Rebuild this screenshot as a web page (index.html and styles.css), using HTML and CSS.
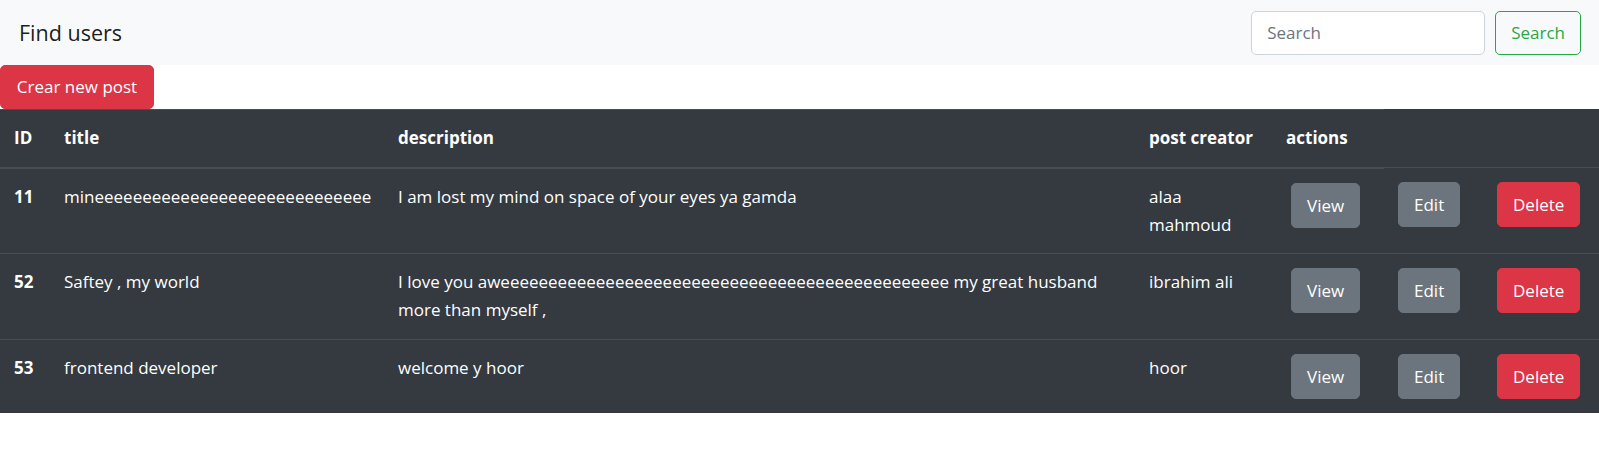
FILE: index.html
```html
<!DOCTYPE html>
<html lang="en">
<head>
<meta charset="utf-8">
<title>Find users</title>
<link rel="stylesheet" href="styles.css">
</head>
<body>
<nav class="navbar">
  <span class="brand">Find users</span>
  <form class="search-form">
    <input class="search-input" type="search" placeholder="Search">
    <button class="btn btn-outline-success" type="button">Search</button>
  </form>
</nav>
<button class="btn btn-danger create-btn" type="button">Crear new post</button>
<table class="posts">
  <colgroup>
    <col class="c-id"><col class="c-title"><col class="c-desc"><col class="c-creator"><col class="c-view"><col class="c-edit"><col class="c-del">
  </colgroup>
  <thead>
    <tr>
      <th>ID</th>
      <th>title</th>
      <th>description</th>
      <th>post creator</th>
      <th>actions</th>
    </tr>
  </thead>
  <tbody>
    <tr>
      <td class="id">11</td>
      <td>mineeeeeeeeeeeeeeeeeeeeeeeeeeeee</td>
      <td>I am lost my mind on space of your eyes ya gamda</td>
      <td>alaa mahmoud</td>
      <td><button class="btn btn-secondary view" type="button">View</button></td>
      <td><button class="btn btn-secondary" type="button">Edit</button></td>
      <td><button class="btn btn-danger" type="button">Delete</button></td>
    </tr>
    <tr>
      <td class="id">52</td>
      <td>Saftey , my world</td>
      <td>I love you aweeeeeeeeeeeeeeeeeeeeeeeeeeeeeeeeeeeeeeeeeeeeeee my great husband more than myself ,</td>
      <td>ibrahim ali</td>
      <td><button class="btn btn-secondary view" type="button">View</button></td>
      <td><button class="btn btn-secondary" type="button">Edit</button></td>
      <td><button class="btn btn-danger" type="button">Delete</button></td>
    </tr>
    <tr>
      <td class="id">53</td>
      <td>frontend developer</td>
      <td>welcome y hoor</td>
      <td>hoor</td>
      <td><button class="btn btn-secondary view" type="button">View</button></td>
      <td><button class="btn btn-secondary" type="button">Edit</button></td>
      <td><button class="btn btn-danger" type="button">Delete</button></td>
    </tr>
  </tbody>
</table>
</body>
</html>
```
FILE: styles.css
```css
* { box-sizing: border-box; }

body {
  margin: 0;
  font-family: "Open Sans", "Noto Sans", sans-serif;
  font-size: 17px;
  line-height: 28px;
  color: #212529;
  background: #fff;
}

.navbar {
  height: 65px;
  background: #f8f9fa;
  display: flex;
  align-items: center;
  justify-content: space-between;
  padding: 0 18px 0 19px;
}

.brand {
  font-size: 21.5px;
  line-height: 30px;
  color: rgba(0, 0, 0, 0.9);
}

.search-form {
  display: flex;
  align-items: center;
  gap: 10px;
  margin: 0;
}

.search-input {
  width: 234px;
  height: 44px;
  padding: 0 15px;
  border: 1px solid #ced4da;
  border-radius: 5px;
  font: inherit;
  color: #495057;
  background: #fff;
}
.search-input::placeholder { color: #6c757d; }

.btn {
  font: inherit;
  line-height: 29px;
  padding: 7px 15px;
  border: 1px solid transparent;
  border-radius: 5px;
  cursor: pointer;
  display: inline-block;
}

.btn-outline-success {
  color: #28a745;
  border-color: #28a745;
  background: transparent;
  height: 44px;
  padding: 0 15px;
  line-height: 42px;
}

.btn-danger {
  color: #fff;
  background: #dc3545;
  border-color: #dc3545;
}

.btn-secondary {
  color: #fff;
  background: #6c757d;
  border-color: #6c757d;
}

.create-btn {
  display: block;
  width: 154px;
  height: 44px;
  padding: 0;
  line-height: 42px;
  text-align: center;
}

.posts {
  width: 100%;
  border-collapse: collapse;
  table-layout: fixed;
  background: #343a40;
  color: #fff;
}

.c-id { width: 50px; }
.c-title { width: 334px; }
.c-desc { width: 751px; }
.c-creator { width: 137px; }
.c-view { width: 112px; }
.c-edit { width: 99px; }
.c-del { width: 116px; }

.posts th,
.posts td {
  padding: 14px 14px 14.5px;
  text-align: left;
}

.posts th {
  font-weight: 700;
  vertical-align: bottom;
  border-top: 1px solid #454d55;
  border-bottom: 2px solid #454d55;
  white-space: nowrap;
}

.posts td {
  vertical-align: top;
  border-top: 1px solid #454d55;
}

.posts td.id { font-weight: 700; }

.view { margin-left: 5px; }
```
